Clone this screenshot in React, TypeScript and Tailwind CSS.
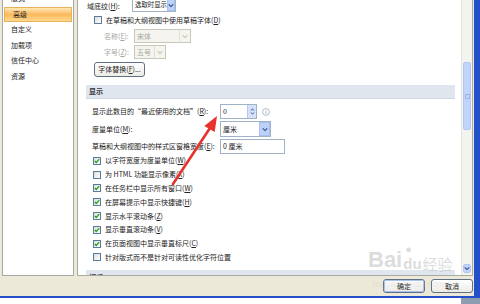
import React from 'react';

const font = "font-['Noto_Sans_CJK_SC','Liberation_Sans',sans-serif]";

const Check = ({ on }: { on?: boolean }) => (
  <span className="w-[8px] h-[8px] border border-[#5c7a99] bg-gradient-to-br from-[#dcdcd6] to-white flex items-center justify-center shrink-0">
    {on && (
      <svg viewBox="0 0 8 8" className="w-[6px] h-[6px]">
        <path d="M1 4 L3 6 L7 1.5" stroke="#21a121" strokeWidth="1.7" fill="none" />
      </svg>
    )}
  </span>
);

const Chevron = ({ color = '#2b4a8a' }: { color?: string }) => (
  <svg viewBox="0 0 8 6" className="w-[6px] h-[5px]">
    <path d="M1 1.5 L4 4.5 L7 1.5" stroke={color} strokeWidth="1.4" fill="none" />
  </svg>
);

const Select = ({ text, w, btn = 'w-[11px]', disabled }: { text: string; w: string; btn?: string; disabled?: boolean }) => (
  <div
    className={`${w} h-full flex border ${
      disabled ? 'border-[#c9c7ba] bg-[#f5f4ee] text-[#a6a6a0]' : 'border-[#9fb2c8] bg-white text-[#222]'
    }`}
  >
    <span className="flex-1 flex items-center pl-[2px] whitespace-nowrap overflow-hidden">{text}</span>
    <span
      className={`${btn} shrink-0 flex items-center justify-center ${
        disabled ? 'bg-[#f5f4ee] border-l border-[#e2e0d6]' : 'bg-[#bcd0f8] border border-[#a8bff0]'
      }`}
    >
      <Chevron color={disabled ? '#c3c2b8' : '#2b4a8a'} />
    </span>
  </div>
);

const CheckRow = ({ on, children }: { on?: boolean; children: React.ReactNode }) => (
  <div className="h-[13.8px] flex items-center gap-[4px] pl-[7px]">
    <Check on={on} />
    <span>{children}</span>
  </div>
);

const NavItem = ({ label, active }: { label: string; active?: boolean }) => (
  <div
    className={`h-[15.5px] flex items-center pl-[8px] ${
      active
        ? 'bg-gradient-to-b from-[#fde8b6] via-[#fbb95e] to-[#fdd98a] border border-[#e8b25a] mx-[1px] pl-[7px]'
        : ''
    }`}
  >
    {label}
  </div>
);

const XpButton = ({ label, focus }: { label: string; focus?: boolean }) => (
  <div className="w-[42px] h-[14px] rounded-[3px] border border-[#5f6f86] bg-gradient-to-b from-white to-[#ecebe6] flex items-center justify-center">
    <div
      className={`w-full h-full rounded-[2px] flex items-center justify-center ${
        focus ? 'border border-[#a9c2ee]' : ''
      }`}
    >
      {label}
    </div>
  </div>
);

export default function App() {
  return (
    <div className={`relative w-[480px] h-[304px] overflow-hidden bg-white text-[7px] leading-none text-[#222] ${font}`}>
      <div className="h-[298px] flex flex-col bg-[#ece9d8] border-r-[6px] border-b-[2px] border-[#2350c8]">
        <div className="h-[277px] shrink-0 flex pl-[2px] pr-[1px]">
          {/* nav */}
          <div className="w-[72px] h-[276px] bg-white border border-t-0 border-[#a8a8a4] overflow-hidden">
            <div className="-mt-[9px]">
              <NavItem label="版式" />
              <NavItem label="高级" active />
              <NavItem label="自定义" />
              <NavItem label="加载项" />
              <NavItem label="信任中心" />
              <NavItem label="资源" />
            </div>
          </div>

          {/* content */}
          <div className="ml-[3px] flex-1 h-[276px] flex bg-white border border-t-0 border-[#a8a8a4] overflow-hidden">
            <div className="flex-1 pl-[8px] pr-[6px] overflow-hidden">
              <div className="h-[12px] flex items-center">
                <span className="w-[46px] pl-[1px]">
                  域底纹(<u>H</u>):
                </span>
                <div className="h-[14px] -mt-[2px] text-[6.4px]">
                  <Select text="选取时显示" w="w-[44px]" btn="w-[8px]" />
                </div>
              </div>

              <div className="mt-[1px] h-[14px] flex items-center gap-[4px] pl-[8px]">
                <Check />
                <span>
                  在草稿和大纲视图中使用草稿字体(<u>D</u>)
                </span>
              </div>

              <div className="mt-[2px] h-[14px] flex items-center pl-[18px] text-[#a6a6a0]">
                <span className="w-[30px]">
                  名称(<u>E</u>):
                </span>
                <Select text="宋体" w="w-[57px]" disabled />
              </div>

              <div className="mt-[2px] h-[14px] flex items-center pl-[18px] text-[#a6a6a0]">
                <span className="w-[30px]">
                  字号(<u>Z</u>):
                </span>
                <Select text="五号" w="w-[32px]" disabled />
              </div>

              <div className="mt-[3px] h-[15px] flex pl-[8px]">
                <div className="w-[51px] h-full rounded-[3px] border border-[#5f6f86] bg-gradient-to-b from-white to-[#ecebe6] flex items-center justify-center">
                  字体替换(<u>F</u>)...
                </div>
              </div>

              <div className="mt-[8px] h-[14px] flex items-center pl-[3px] bg-[#dfe6ed] border-b border-[#cfd8e2] font-bold text-[#333]">
                显示
              </div>

              <div className="mt-[5px] h-[15px] flex items-center pl-[6px]">
                <span className="w-[128px]">
                  显示此数目的“最近使用的文档”(<u>R</u>):
                </span>
                <div className="w-[37px] h-full flex border border-[#9fb2c8]">
                  <span className="flex-1 flex items-center pl-[2px]">0</span>
                  <span className="w-[9px] flex flex-col items-center justify-center bg-[#d6e2fb] border-l border-[#b6c8ee] gap-[1px]">
                    <svg viewBox="0 0 6 4" className="w-[5px] h-[3px]">
                      <path d="M1 3.5 L3 1 L5 3.5" stroke="#2b4a8a" strokeWidth="1.1" fill="none" />
                    </svg>
                    <svg viewBox="0 0 6 4" className="w-[5px] h-[3px]">
                      <path d="M1 0.5 L3 3 L5 0.5" stroke="#2b4a8a" strokeWidth="1.1" fill="none" />
                    </svg>
                  </span>
                </div>
                <svg viewBox="0 0 8 8" className="ml-[5px] w-[8px] h-[8px]">
                  <circle cx="4" cy="4" r="3.4" stroke="#9aa9bd" strokeWidth="0.8" fill="none" />
                  <rect x="3.6" y="1.7" width="0.8" height="0.8" fill="#9aa9bd" />
                  <rect x="3.6" y="3.2" width="0.8" height="2.8" fill="#9aa9bd" />
                </svg>
              </div>

              <div className="mt-[2px] h-[16px] flex items-center pl-[6px]">
                <span className="w-[128px]">
                  度量单位(<u>M</u>):
                </span>
                <Select text="厘米" w="w-[51px]" />
              </div>

              <div className="mt-[2px] h-[15px] flex items-center pl-[6px]">
                <span className="w-[128px]">
                  草稿和大纲视图中的样式区窗格宽度(<u>E</u>):
                </span>
                <div className="w-[65px] h-full flex items-center pl-[2px] border border-[#9fb2c8]">0 厘米</div>
              </div>

              <CheckRow on>
                以字符宽度为度量单位(<u>W</u>)
              </CheckRow>
              <CheckRow>
                为 HTML 功能显示像素(<u>X</u>)
              </CheckRow>
              <CheckRow on>
                在任务栏中显示所有窗口(<u>W</u>)
              </CheckRow>
              <CheckRow on>
                在屏幕提示中显示快捷键(<u>H</u>)
              </CheckRow>
              <CheckRow on>
                显示水平滚动条(<u>Z</u>)
              </CheckRow>
              <CheckRow on>
                显示垂直滚动条(<u>V</u>)
              </CheckRow>
              <CheckRow on>
                在页面视图中显示垂直标尺(<u>C</u>)
              </CheckRow>
              <CheckRow>针对版式而不是针对可读性优化字符位置</CheckRow>

              <div className="mt-[6px] h-[14px] flex items-center pl-[3px] bg-[#dfe6ed] font-bold text-[#333]">
                打印
              </div>
            </div>

            {/* scrollbar */}
            <div className="w-[11px] flex flex-col bg-[#f4f4ef] border-l border-[#e6e6df]">
              <div className="mt-[62px] mx-[1px] h-[68px] rounded-[2px] bg-[#c3d4fb] border border-[#b1c6f3] flex items-center justify-center">
                <div className="w-[5px] h-[5px] border border-[#9fb6ea]" />
              </div>
              <div className="flex-1" />
              <div className="mx-[1px] mb-[2px] h-[9px] rounded-[2px] bg-[#c3d4fb] border border-[#b1c6f3] flex items-center justify-center">
                <Chevron />
              </div>
            </div>
          </div>
        </div>

        {/* buttons */}
        <div className="flex-1 flex items-start justify-end gap-[6px] pt-[2px] pr-[1px]">
          <XpButton label="确定" focus />
          <XpButton label="取消" />
        </div>
      </div>
      <div className="absolute right-0 bottom-0 w-[19px] h-[6px] bg-[#8f9db3]" />

      {/* watermark */}
      <div className="absolute left-[368px] top-[249px] flex items-end text-[rgba(190,190,190,0.55)] font-['Liberation_Sans',sans-serif] pointer-events-none">
        <span className="text-[22px] font-bold leading-none">Bai</span>
        <span className="relative mx-[1px] text-[15px] font-bold leading-none">
          du
          <span className="absolute -top-[12px] left-[2px] text-[11px]">●</span>
        </span>
        <span className={`text-[15px] leading-none ${font}`}>经验</span>
      </div>
      <div className="absolute left-[372px] top-[280px] text-[9px] text-[rgba(200,200,200,0.35)] font-['Liberation_Sans',sans-serif] pointer-events-none">
        jingyan.baidu.com
      </div>

      {/* red arrow */}
      <svg className="absolute inset-0 pointer-events-none" width="480" height="304">
        <line x1="173" y1="184" x2="210" y2="128" stroke="#e8322b" strokeWidth="2.6" strokeLinecap="round" />
        <polygon points="217,116 214.7,132 204.3,126" fill="#e8322b" />
      </svg>
    </div>
  );
}
